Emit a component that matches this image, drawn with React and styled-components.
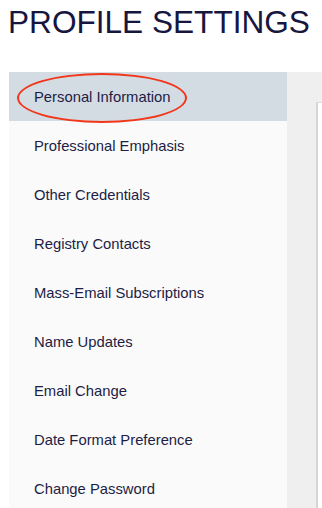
import React from "react";
import styled, { createGlobalStyle } from "styled-components";

const Global = createGlobalStyle`
  html, body {
    margin: 0;
    padding: 0;
    background: #ffffff;
  }
  body {
    font-family: "Liberation Sans", Arial, Helvetica, sans-serif;
  }
`;

const Page = styled.div`
  width: 322px;
  height: 508px;
  overflow: hidden;
  padding-left: 9px;
  box-sizing: border-box;
`;

const Title = styled.h1`
  margin: 4px 0 0 -1px;
  font-size: 31.6px;
  line-height: 36px;
  font-weight: 400;
  color: #16163f;
  white-space: nowrap;
`;

const Layout = styled.div`
  display: flex;
  margin-top: 32px;
  height: 460px;
`;

const Sidebar = styled.nav`
  width: 278px;
  flex-shrink: 0;
  background: #fafafa;
  display: flex;
  flex-direction: column;
`;

const Item = styled.div`
  position: relative;
  height: 48.9px;
  box-sizing: border-box;
  display: flex;
  align-items: center;
  padding: 2px 0 0 25px;
  font-size: 14.8px;
  color: #1d1d45;
  background: ${(p) => (p.active ? "#d3dce3" : "transparent")};
`;

const Circle = styled.span`
  position: absolute;
  left: 8px;
  top: 1px;
  width: 170px;
  height: 50px;
  border: 2.5px solid #f2361a;
  border-radius: 50%;
  box-sizing: border-box;
  z-index: 1;
`;

const Content = styled.div`
  flex: 1;
  background: #efefef;
  padding: 30px 0 0 29px;
`;

const Panel = styled.div`
  height: 100%;
  background: #ffffff;
  border-left: 2px solid #d6d6d6;
  border-top: 1px solid #dcdcdc;
`;

const items = [
  "Personal Information",
  "Professional Emphasis",
  "Other Credentials",
  "Registry Contacts",
  "Mass-Email Subscriptions",
  "Name Updates",
  "Email Change",
  "Date Format Preference",
  "Change Password",
];

export default function App() {
  return (
    <Page>
      <Global />
      <Title>PROFILE SETTINGS</Title>
      <Layout>
        <Sidebar>
          {items.map((label, i) => (
            <Item key={label} active={i === 0}>
              {i === 0 && <Circle />}
              {label}
            </Item>
          ))}
        </Sidebar>
        <Content>
          <Panel />
        </Content>
      </Layout>
    </Page>
  );
}
